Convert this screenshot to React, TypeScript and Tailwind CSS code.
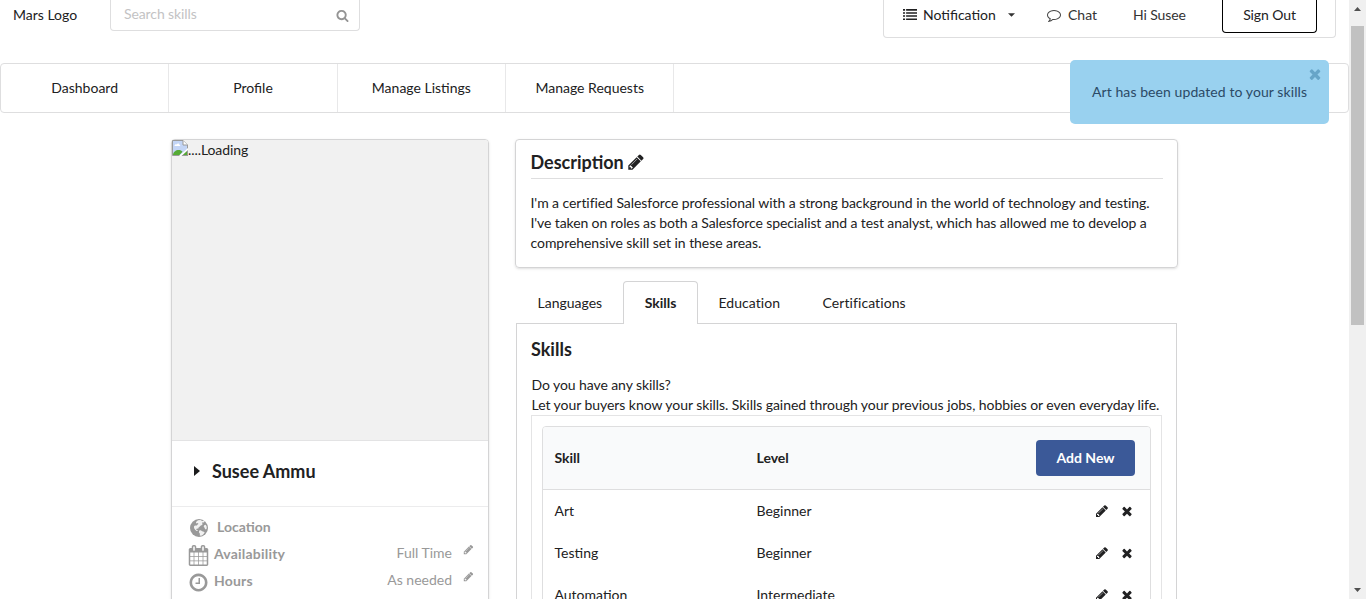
import React from 'react';

type IconProps = { className?: string };

const PATHS = {
  pencil:
    'M491 1536l91-91-235-235-91 91v107h128v128h107zm523-928q0-22-22-22-10 0-17 7l-542 542q-7 7-7 17 0 22 22 22 10 0 17-7l542-542q7-7 7-17zm-54-192l416 416-832 832h-416v-416l832-832zm683 96q0 53-37 90l-166 166-416-416 166-165q36-38 90-38 53 0 91 38l235 234q37 39 37 91z',
  search:
    'M1216 832q0-185-131.5-316.5t-316.5-131.5-316.5 131.5-131.5 316.5 131.5 316.5 316.5 131.5 316.5-131.5 131.5-316.5zm512 832q0 52-38 90t-90 38q-54 0-90-38l-343-342q-179 124-399 124-143 0-273.5-55.5t-225-150-150-225-55.5-273.5 55.5-273.5 150-225 225-150 273.5-55.5 273.5 55.5 225 150 150 225 55.5 273.5q0 220-124 399l343 343q37 37 37 90z',
  close:
    'M1490 1322q0 40-28 68l-136 136q-28 28-68 28t-68-28l-294-294-294 294q-28 28-68 28t-68-28l-136-136q-28-28-28-68t28-68l294-294-294-294q-28-28-28-68t28-68l136-136q28-28 68-28t68 28l294 294 294-294q28-28 68-28t68 28l136 136q28 28 28 68t-28 68l-294 294 294 294q28 28 28 68z',
  comment:
    'M896 384q-204 0-381.5 69.5t-282 187.5-104.5 255q0 112 71.5 213.5t201.5 175.5l87 50-27 96q-24 91-70 172 152-63 275-171l43-38 57 6q69 8 130 8 204 0 381.5-69.5t282-187.5 104.5-255-104.5-255-282-187.5-381.5-69.5zm896 512q0 174-120 321.5t-326 233-450 85.5q-70 0-145-8-198 175-460 242-49 14-114 22h-5q-15 0-27-10.5t-16-27.5v-1q-3-4-.5-12t2-10 4.5-9.5l6-9 7-8.5 8-9q7-8 31-34.5t34.5-38 31-39.5 32.5-51 27-59 26-76q-157-89-247.5-220t-90.5-281q0-174 120-321.5t326-233 450-85.5 450 85.5 326 233 120 321.5z',
  list: 'M0 256h256v192h-256zM384 256h1408v192h-1408zM0 640h256v192h-256zM384 640h1408v192h-1408zM0 1024h256v192h-256zM384 1024h1408v192h-1408zM0 1408h256v192h-256zM384 1408h1408v192h-1408z',
  calendar:
    'M192 1664h288v-288h-288v288zm352 0h320v-288h-320v288zm-352-352h288v-320h-288v320zm352 0h320v-320h-320v320zm-352-384h288v-288h-288v288zm736 736h320v-288h-320v288zm-384-736h320v-288h-320v288zm768 736h288v-288h-288v288zm-384-352h320v-320h-320v320zm-352-864v-288q0-13-9.5-22.5t-22.5-9.5h-64q-13 0-22.5 9.5t-9.5 22.5v288q0 13 9.5 22.5t22.5 9.5h64q13 0 22.5-9.5t9.5-22.5zm736 864h288v-320h-288v320zm-384-384h320v-288h-320v288zm384 0h288v-288h-288v288zm32-480v-288q0-13-9.5-22.5t-22.5-9.5h-64q-13 0-22.5 9.5t-9.5 22.5v288q0 13 9.5 22.5t22.5 9.5h64q13 0 22.5-9.5t9.5-22.5zm384-64v1280q0 52-38 90t-90 38h-1408q-52 0-90-38t-38-90v-1280q0-52 38-90t90-38h128v-96q0-66 47-113t113-47h64q66 0 113 47t47 113v96h384v-96q0-66 47-113t113-47h64q66 0 113 47t47 113v96h128q52 0 90 38t38 90z',
  clock:
    'M1024 544v448q0 14-9 23t-23 9h-320q-14 0-23-9t-9-23v-64q0-14 9-23t23-9h224v-352q0-14 9-23t23-9h64q14 0 23 9t9 23zm416 352q0-148-73-273t-198-198-273-73-273 73-198 198-73 273 73 273 198 198 273 73 273-73 198-198 73-273zm224 0q0 209-103 385.5t-279.5 279.5-385.5 103-385.5-103-279.5-279.5-103-385.5 103-385.5 279.5-279.5 385.5-103 385.5 103 279.5 279.5 103 385.5z',
};

function Icon({ name, className }: IconProps & { name: keyof typeof PATHS }) {
  return (
    <svg viewBox="0 0 1792 1792" fill="currentColor" className={`shrink-0 ${className ?? ''}`}>
      <path d={PATHS[name]} />
    </svg>
  );
}

function Globe({ className }: IconProps) {
  return (
    <svg viewBox="0 0 18 18" className={`shrink-0 ${className ?? ''}`}>
      <circle cx="9" cy="9" r="9" fill="currentColor" />
      <path
        d="M8 1.300l2.500-.2 1.600.9 1.400-.3 1.200.9-.9.900-1.300-.2-.5.900.8.9-.9 1-1.400.6-1 1.100-1.100.9-.2 1-1-.3-.9.500.2 1 .9.200.4.900-1.200-.1-1.500-1.200-1.100-1.700.1-1.900 1.300-.7 1.500.2.400-.9 1.100-.6-.5-1-1.400.3-.6-.8.600-1z M9.200 11.600l1.500-.3 1.500.9 1.600.5.900.8-.9 1.200-1.100 1.200-1.600.9-1.300-.2.100-1.800-1-1.500z M14.200 6.200l1.500-.4.9 1.500.2 2-.8 1.300-1-.7-.4-1.200-.9-.9z"
        fill="white"
        fillOpacity=".86"
      />
    </svg>
  );
}

function BrokenImage() {
  return (
    <svg viewBox="0 0 16 16" className="size-4 shrink-0">
      <path d="M.5.500h10.500l4.500 4.500v4.500L8.500 15.500h-8z" fill="#c3d5f6" stroke="#9a9a9a" />
      <path d="M11 .5v4.500h4.500" fill="white" stroke="#9a9a9a" />
      <path d="M2.500 6c0-1.500 1.500-2 2.200-1.500C5.500 3 7.500 3.500 7.500 5 8.500 5 8.500 6 8 6z" fill="white" />
      <path d="M1 15c0-3 3-5 5.500-5 2 0 3 .5 4 1.700L7.500 15z" fill="#55ab35" />
      <path d="M16 9v7H9z" fill="#9a9a9a" />
      <path d="M15 11v4h-4z" fill="#55ab35" />
      <path d="M7.500 16.500l9-8" stroke="white" strokeWidth="1.600" />
    </svg>
  );
}

function TopBar() {
  return (
    <header className="flex h-[38px] items-start">
      <div className="ml-[13px] w-[97px] pt-[5px]">Mars Logo</div>
      <div className="flex h-[31px] w-[250px] items-start justify-between rounded-b-[4px] border border-t-0 border-[#dededf] pr-[10px] pl-[13px]">
        <span className="pt-[4px] tracking-[-0.1px] text-[#c3c3c4]">Search skills</span>
        <Icon name="search" className="mt-[9px] size-[13px] text-[#949494]" />
      </div>
      <div className="mr-[13px] ml-auto flex h-[38px] w-[453px] items-start rounded-b-[4px] border border-t-0 border-[#dededf] pt-[5px]">
        <Icon name="list" className="mt-[2px] ml-[18.500px] size-[14.500px]" />
        <span className="ml-[6px] w-[85px]">Notification</span>
        <svg viewBox="0 0 8 4" className="mt-[8px] h-[4px] w-[7px]">
          <path d="M0 0h8L4 4z" fill="#333" />
        </svg>
        <Icon name="comment" className="mt-[3px] ml-[32px] size-[14px] text-[#444]" />
        <span className="ml-[7px] w-[65px] text-[#333]">Chat</span>
        <span className="w-[89px] tracking-[-0.1px] text-[#333]">Hi Susee</span>
        <button className="-mt-[5px] h-[33px] w-[95px] rounded-b-[4px] border border-t-0 border-black pb-[2px] tracking-[-0.1px]">
          Sign Out
        </button>
      </div>
    </header>
  );
}

function NavBar() {
  return (
    <nav className="mt-[25px] flex h-[50px] rounded-[4px] border border-[#dededf]">
      {['Dashboard', 'Profile', 'Manage Listings', 'Manage Requests'].map((t) => (
        <a key={t} className="flex w-[168.350px] items-center justify-center border-r border-[#e8e8e9]">
          {t}
        </a>
      ))}
    </nav>
  );
}

function Toast() {
  return (
    <div className="absolute top-[60px] left-[1070px] flex h-16 w-[259px] items-center rounded-[5px] bg-[#99d1ef] pl-[22px] text-[#2b4a66]">
      <span className="whitespace-nowrap tracking-[0.080px]">Art has been updated to your skills</span>
      <Icon name="close" className="absolute top-[6px] right-[6px] size-[16px] text-[#67a5c8]" />
    </div>
  );
}

function ProfileCard() {
  return (
    <aside className="h-[500px] w-[318px] rounded-t-[4px] border border-[#d4d4d5] shadow-sm">
      <div className="flex h-[301px] items-start rounded-t-[3px] border-b border-[#e3e3e4] bg-[#f1f1f1]">
        <BrokenImage />
        <span className="tracking-[-0.080px]">....Loading</span>
      </div>
      <div className="flex h-[66px] items-center border-b border-[#ececed] pb-[5px] pl-[22px]">
        <svg viewBox="0 0 6 10" className="h-[10px] w-[6px]">
          <path d="M0 0l6 5-6 5z" fill="#1b1c1d" />
        </svg>
        <h2 className="ml-[12px] text-[18px] font-bold">Susee Ammu</h2>
      </div>
      <div className="px-[14px] pt-[7px] text-[#999]">
        <div className="flex h-[27px] items-center">
          <span className="w-[31px] pl-[3.500px]"><Globe className="size-[18px]" /></span>
          <b className="mb-[2px]">Location</b>
        </div>
        <StatusRow icon="calendar" label="Availability" value="Full Time" />
        <StatusRow icon="clock" label="Hours" value="As needed" />
      </div>
    </aside>
  );
}

function StatusRow({ icon, label, value }: { icon: 'calendar' | 'clock'; label: string; value: string }) {
  return (
    <div className="flex h-[27px] items-center">
      <Icon name={icon} className="mt-px ml-[2px] size-[21px]" />
      <b className="mb-[2px] ml-[5px] tracking-[0.200px]">{label}</b>
      <span className="mb-[4px] ml-auto">{value}</span>
      <Icon name="pencil" className="mb-[10px] ml-[11px] size-[11px]" />
    </div>
  );
}

function Description() {
  return (
    <section className="h-[129px] w-[663px] rounded-[4px] border border-[#d4d4d5] px-[14.500px] shadow-sm">
      <h2 className="flex h-[39px] items-center border-b border-[#dededf] pt-[6px] text-[18px] font-bold">
        Description
        <Icon name="pencil" className="ml-[3px] size-[18px]" />
      </h2>
      <p className="mt-[14px] whitespace-nowrap">
        <span className="tracking-[-0.065px]">
          I'm a certified Salesforce professional with a strong background in the world of technology and testing.
        </span>
        <br />
        <span className="tracking-[-0.105px]">
          I've taken on roles as both a Salesforce specialist and a test analyst, which has allowed me to develop a
        </span>
        <br />
        <span className="tracking-[-0.050px]">comprehensive skill set in these areas.</span>
      </p>
    </section>
  );
}

const SKILLS = [
  ['Art', 'Beginner'],
  ['Testing', 'Beginner'],
  ['Automation', 'Intermediate'],
];

function SkillsPanel() {
  return (
    <section className="mt-[13px] ml-px w-[661px]">
      <div className="flex h-[43px] items-end">
        <a className="flex h-[43px] w-[107px] items-center border-b border-[#d4d4d5] pt-[2px] pl-[21.500px]">Languages</a>
        <a className="flex h-[43px] w-[75px] items-center justify-center rounded-t-[4px] border border-b-0 border-[#d4d4d5] font-bold">
          Skills
        </a>
        <a className="flex h-[43px] w-[104px] items-center border-b border-[#d4d4d5] pt-[2px] pl-[20.500px] tracking-[0.050px]">Education</a>
        <a className="flex h-[43px] flex-1 items-center border-b border-[#d4d4d5] pt-[2px] pl-[20.500px] tracking-[0.080px]">Certifications</a>
      </div>
      <div className="h-[400px] border-x border-[#d4d4d5] px-[14px] pt-[12px]">
        <h2 className="text-[18px] leading-[26px] font-bold">Skills</h2>
        <p className="mt-[13px] whitespace-nowrap pl-[0.500px]">
          <span className="tracking-[-0.080px]">Do you have any skills?</span>
          <br />
          <span className="tracking-[-0.052px]">
            Let your buyers know your skills. Skills gained through your previous jobs, hobbies or even everyday life.
          </span>
        </p>
        <div className="h-[300px] border border-[#e4e4e5] p-[10px]">
          <div className="h-[300px] rounded-t-[4px] border border-[#dededf]">
            <div className="flex h-[63px] items-center rounded-t-[3px] border-b border-[#dededf] bg-[#f9fafb] pr-[15px] pl-[11.500px] font-bold">
              <span className="w-[202px]">Skill</span>
              <span>Level</span>
              <button className="ml-auto h-[36px] w-[99px] rounded-[4px] bg-[#3b5998] font-bold text-white">
                Add New
              </button>
            </div>
            {SKILLS.map(([skill, level]) => (
              <div key={skill} className="flex h-[42px] items-center pr-[16px] pl-[11.500px]">
                <span className="w-[202px]">{skill}</span>
                <span>{level}</span>
                <Icon name="pencil" className="mr-[11px] ml-auto size-[14px]" />
                <Icon name="close" className="size-[14px]" />
              </div>
            ))}
          </div>
        </div>
      </div>
    </section>
  );
}

function Scrollbar() {
  return (
    <div className="flex h-[599px] w-[17px] flex-col items-center bg-[#f0f0f0]">
      <svg viewBox="0 0 7 4" className="mt-[7px] h-[4px] w-[7px]">
        <path d="M3.500 0L7 4H0z" fill="#505050" />
      </svg>
      <div className="mt-[15px] h-[299px] w-[13px] bg-[#c1c1c1]" />
      <svg viewBox="0 0 7 4" className="mt-auto mb-[7px] h-[4px] w-[7px]">
        <path d="M0 0h7L3.500 4z" fill="#505050" />
      </svg>
    </div>
  );
}

export default function App() {
  return (
    <div className="relative flex h-[599px] w-[1366px] overflow-hidden bg-white font-['Lato',sans-serif] text-[14px] leading-[20px] text-[#212122]">
      <div className="h-[599px] w-[1349px] overflow-hidden">
        <TopBar />
        <NavBar />
        <main className="mt-[26px] flex items-start gap-[26px] pl-[171px]">
          <ProfileCard />
          <div>
            <Description />
            <SkillsPanel />
          </div>
        </main>
      </div>
      <Scrollbar />
      <Toast />
    </div>
  );
}
